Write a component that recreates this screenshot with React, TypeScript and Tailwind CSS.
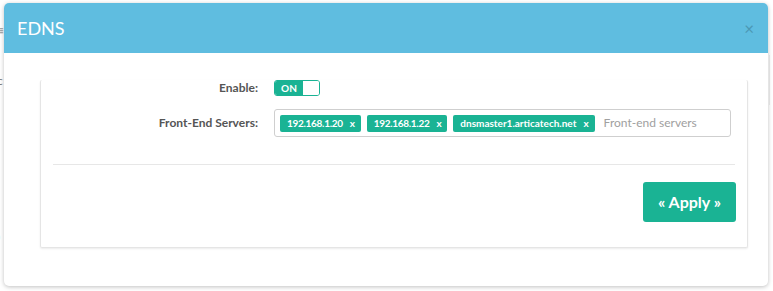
import React from "react";

const font = { fontFamily: "Lato, 'Open Sans', sans-serif" };

function Tag({ label, tight }: { label: string; tight?: boolean }) {
  return (
    <span
      className={
        "flex h-[17px] items-center gap-[7px] whitespace-nowrap rounded-[2px] bg-[#1ab394] pl-[7px] pr-[6px] text-[10px] font-bold text-white " +
        (tight ? "tracking-[-0.3px]" : "tracking-normal")
      }
    >
      {label}
      <span className="text-[10px]">x</span>
    </span>
  );
}

export default function App() {
  return (
    <div className="relative h-[291px] w-[773px] overflow-hidden bg-white" style={font}>
      {/* page behind the modal */}
      <span className="absolute left-[-3px] top-[22px] text-[12px] text-[#999]">≡</span>
      <span className="absolute left-[-3px] top-[72px] text-[12px] text-[#777]">c</span>
      <span className="absolute left-[-3px] top-[228px] text-[12px] text-[#888]">)</span>
      <div className="absolute left-[769px] top-[55px] h-[50px] w-[4px] border-l border-[#eee]" />

      <div className="absolute left-[4px] top-[3px] flex h-[283px] w-[764px] flex-col rounded-[5px] bg-white shadow-[0_1px_4px_rgba(0,0,0,0.25)]">
        <div className="flex h-[50px] items-center justify-between rounded-t-[5px] bg-[#5fbde0] pl-[13px] pr-[14px]">
          <span className="text-[18px] text-white">EDNS</span>
          <span className="text-[17px] leading-none text-[#4c98b4]">×</span>
        </div>
        <div className="pl-[36px] pt-[27px]">
          <div className="flex h-[168px] w-[708px] flex-col rounded-[2px] border-x border-b border-[#e5e5e5] px-[12px] shadow-[0_1px_2px_rgba(0,0,0,0.08)]">
            <div className="flex h-[16px] items-center gap-[16px]">
              <span className="w-[205px] text-right text-[12px] font-bold text-[#555]">Enable:</span>
              <div className="flex h-[16px] w-[46px] overflow-hidden rounded-[3px] border border-[#1ab394]">
                <span className="flex w-[28px] items-center justify-center bg-[#1ab394] text-[10px] font-bold text-white">ON</span>
                <span className="flex-1 bg-white" />
              </div>
            </div>
            <div className="mt-[13px] flex items-center gap-[16px]">
              <span className="w-[205px] text-right text-[12px] font-bold text-[#555]">Front-End Servers:</span>
              <div className="flex h-[28px] w-[457px] items-center gap-[6px] rounded-[3px] border border-[#cfcfcf] px-[5px]">
                <Tag label="192.168.1.20" tight />
                <Tag label="192.168.1.22" tight />
                <Tag label="dnsmaster1.articatech.net" />
                <span className="ml-[3px] whitespace-nowrap text-[12px] text-[#a0a0a0]">Front-end servers</span>
              </div>
            </div>
            <div className="mt-[27px] border-t border-[#e7e7e7]" />
            <div className="mt-[17px] flex justify-end">
              <button className="mr-[-1px] h-[40px] w-[93px] rounded-[3px] bg-[#1ab394] text-[16px] font-bold text-white">
                « Apply »
              </button>
            </div>
          </div>
        </div>
      </div>
    </div>
  );
}
